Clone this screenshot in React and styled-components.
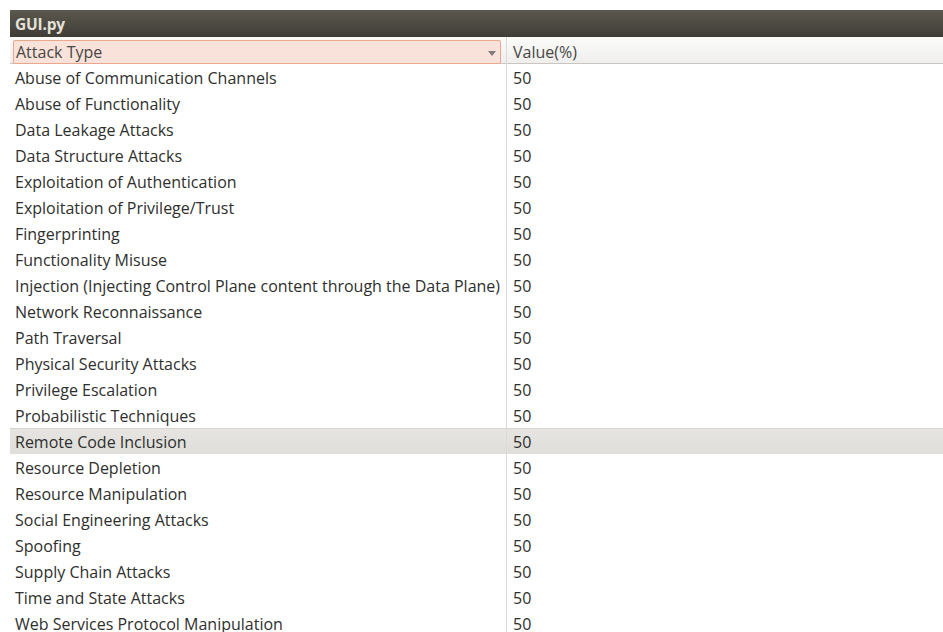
import React from "react";
import styled, { createGlobalStyle } from "styled-components";

const Global = createGlobalStyle`
  html, body { margin: 0; padding: 0; background: #ffffff; }
  body { font-family: "Open Sans", "DejaVu Sans", sans-serif; }
`;

const Screen = styled.div`
  padding: 10px 0 0 10px;
  height: 622px;
  overflow: hidden;
`;

const Window = styled.div`
  display: flex;
  flex-direction: column;
  width: 933px;
`;

const TitleBar = styled.div`
  height: 27px;
  display: flex;
  align-items: center;
  padding-left: 5px;
  background: linear-gradient(#5b584d, #3f3d37);
  color: #e4e1d9;
  font-weight: 700;
  font-size: 15.5px;
  letter-spacing: -0.2px;
`;

const HeaderRow = styled.div`
  display: grid;
  grid-template-columns: 497px 1fr;
  height: 26px;
  background: linear-gradient(#fbfbfa, #efeeec);
  border-bottom: 1px solid #c9c6c1;
`;

const SortCell = styled.div`
  display: flex;
  align-items: center;
  padding: 3px 5px 2px 3px;
  border-right: 1px solid #dcdad6;
`;

const SortBox = styled.div`
  flex: 1;
  height: 100%;
  box-sizing: border-box;
  display: flex;
  align-items: center;
  justify-content: space-between;
  padding: 0 4px 0 2px;
  background: #f8e2d9;
  border: 1px solid #eaa78e;
  border-radius: 2px;
  color: #474745;
  font-size: 16px;
`;

const Arrow = styled.span`
  width: 0;
  height: 0;
  border-left: 4px solid transparent;
  border-right: 4px solid transparent;
  border-top: 5px solid #7d7b77;
  margin-top: 2px;
`;

const HeadCell = styled.div`
  display: flex;
  align-items: center;
  padding-left: 6px;
  color: #474745;
  font-size: 16px;
`;

const Body = styled.div`
  display: flex;
  flex-direction: column;
`;

const Row = styled.div`
  display: grid;
  grid-template-columns: 497px 1fr;
  height: 26px;
  background: ${(p) => (p.$selected ? "linear-gradient(#e6e5e2, #dfdeda)" : "#ffffff")};
  box-shadow: ${(p) => (p.$selected ? "inset 0 1px 0 #d6d4d0" : "none")};
`;

const Cell = styled.div`
  display: flex;
  align-items: center;
  padding-top: 1px;
  padding-left: ${(p) => (p.$first ? "5px" : "6px")};
  border-right: ${(p) => (p.$first ? "1px solid #dcdad6" : "none")};
  color: #2f2f2d;
  font-size: 16px;
  white-space: nowrap;
`;

const attacks = [
  "Abuse of Communication Channels",
  "Abuse of Functionality",
  "Data Leakage Attacks",
  "Data Structure Attacks",
  "Exploitation of Authentication",
  "Exploitation of Privilege/Trust",
  "Fingerprinting",
  "Functionality Misuse",
  "Injection (Injecting Control Plane content through the Data Plane)",
  "Network Reconnaissance",
  "Path Traversal",
  "Physical Security Attacks",
  "Privilege Escalation",
  "Probabilistic Techniques",
  "Remote Code Inclusion",
  "Resource Depletion",
  "Resource Manipulation",
  "Social Engineering Attacks",
  "Spoofing",
  "Supply Chain Attacks",
  "Time and State Attacks",
  "Web Services Protocol Manipulation",
];

export default function App() {
  return (
    <>
      <Global />
      <Screen>
        <Window>
          <TitleBar>GUI.py</TitleBar>
          <HeaderRow>
            <SortCell>
              <SortBox>
                <span>Attack Type</span>
                <Arrow />
              </SortBox>
            </SortCell>
            <HeadCell>Value(%)</HeadCell>
          </HeaderRow>
          <Body>
            {attacks.map((name) => (
              <Row key={name} $selected={name === "Remote Code Inclusion"}>
                <Cell $first>{name}</Cell>
                <Cell>50</Cell>
              </Row>
            ))}
          </Body>
        </Window>
      </Screen>
    </>
  );
}
